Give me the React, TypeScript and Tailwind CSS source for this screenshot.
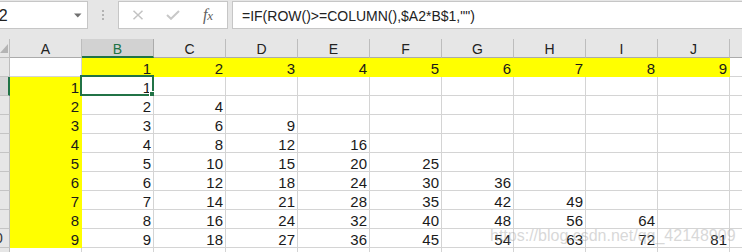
import React from "react";

const COLS = ["A", "B", "C", "D", "E", "F", "G", "H", "I", "J"];

function RowHeader({ label, selected }: { label: string; selected?: boolean }) {
  return (
    <div
      className={`w-[10px] shrink-0 overflow-hidden flex border-b border-[#c4c4c4] ${
        selected ? "bg-[#d6d6d6] border-r-2 border-r-[#217346]" : "bg-[#e6e6e6] border-r border-r-[#bdbdbd]"
      }`}
    >
      <div className="w-[30px] shrink-0 -ml-[20px] text-center text-[14px] leading-[18px] text-[#333]">{label}</div>
    </div>
  );
}

function Cell({ value, yellow, selected }: { value: string; yellow?: boolean; selected?: boolean }) {
  return (
    <div
      className={`relative w-[72px] shrink-0 border-r border-b text-right pr-[2px] pt-[2px] text-[15px] leading-[17px] ${
        yellow ? "bg-[#ffff00] border-[#ffff00]" : "bg-white border-[#d4d4d4]"
      }`}
    >
      {value}
      {selected && (
        <div className="absolute -left-[2px] -top-[2px] w-[74px] h-[21px] border-2 border-[#217346]">
          <div className="absolute -right-[4px] -bottom-[4px] w-[7px] h-[7px] bg-[#217346] border border-white" />
        </div>
      )}
    </div>
  );
}

export default function App() {
  const rows = [1, 2, 3, 4, 5, 6, 7, 8, 9];
  return (
    <div className="relative w-[742px] h-[252px] overflow-hidden bg-white font-['Liberation_Sans',Arial,sans-serif] text-[#1a1a1a]">
      {/* formula toolbar */}
      <div className="h-[39px] bg-[#e6e6e6] pt-[1px] flex items-start">
        <div className="h-[28px] w-[88px] shrink-0 overflow-hidden bg-white border border-l-0 border-[#c6c6c6] flex items-center justify-between pr-[5px]">
          <span className="text-[16px] -ml-[12px] text-[#222] pt-[1px]">B2</span>
          <svg width="8" height="5" viewBox="0 0 8 5">
            <path d="M0 0.5H7.5L3.75 4.5Z" fill="#707070" />
          </svg>
        </div>
        <div className="w-[30px] h-[28px] shrink-0 flex flex-col items-center justify-center gap-[2px]">
          <div className="w-[2px] h-[2px] bg-[#b3b3b3]" />
          <div className="w-[2px] h-[2px] bg-[#b3b3b3]" />
          <div className="w-[2px] h-[2px] bg-[#b3b3b3]" />
        </div>
        <div className="h-[28px] w-[110px] shrink-0 bg-white border border-[#c6c6c6] flex items-center">
          <div className="w-[38px] flex justify-center">
            <svg width="12" height="10" viewBox="0 0 12 10">
              <path d="M1.5 0.8L10.5 9.2M10.5 0.8L1.5 9.2" stroke="#c3c3c3" strokeWidth="1.5" />
            </svg>
          </div>
          <div className="w-[32px] flex justify-center">
            <svg width="14" height="10" viewBox="0 0 14 10">
              <path d="M1 5L5 8.8L13 1" stroke="#c8c8c8" strokeWidth="2" fill="none" />
            </svg>
          </div>
          <div className="w-[38px] flex justify-center">
            <span className="italic font-['Liberation_Serif',serif] text-[16px] leading-none text-[#5f5f5f]">
              f<span className="text-[13px]">x</span>
            </span>
          </div>
        </div>
        <div className="ml-[4px] h-[28px] flex-1 bg-white border border-r-0 border-[#c6c6c6] pl-[9px] pt-[3px] flex items-center text-[14px] text-[#222] whitespace-nowrap">
          =IF(ROW()&gt;=COLUMN(),$A2*B$1,"")
        </div>
      </div>

      {/* column headers */}
      <div className="flex h-[19px] bg-[#e6e6e6]">
        <div className="w-[10px] shrink-0 border-r border-b border-[#bdbdbd] flex items-end justify-end pb-[4px] pr-[1px]">
          <svg width="8" height="9" viewBox="0 0 8 9">
            <path d="M8 0V9H0Z" fill="#b4b4b4" />
          </svg>
        </div>
        {COLS.map((c) =>
          c === "B" ? (
            <div
              key={c}
              className="w-[72px] shrink-0 bg-[#d2d2d2] border-r border-r-[#ababab] border-b-2 border-b-[#217346] text-center text-[14px] leading-[18px] pt-[1px] text-[#217346]"
            >
              {c}
            </div>
          ) : (
            <div
              key={c}
              className="w-[72px] shrink-0 border-r border-r-[#bdbdbd] border-b border-b-[#ababab] text-center text-[14px] leading-[18px] pt-[1px] text-[#222]"
            >
              {c}
            </div>
          )
        )}
        <div className="flex-1 border-b border-[#ababab]" />
      </div>

      {/* first sheet row */}
      <div className="flex h-[19px]">
        <RowHeader label="1" />
        <Cell value="" />
        {rows.map((c) => (
          <Cell key={c} value={String(c)} yellow />
        ))}
        <div className="flex-1 border-b border-[#d4d4d4]" />
      </div>

      {rows.map((r) => (
        <div key={r} className="flex h-[19px]">
          <RowHeader label={String(r + 1)} selected={r === 1} />
          <Cell value={String(r)} yellow />
          {rows.map((c) => (
            <Cell key={c} value={r >= c ? String(r * c) : ""} selected={r === 1 && c === 1} />
          ))}
          <div className="flex-1 border-b border-[#d4d4d4]" />
        </div>
      ))}

      {/* partial row */}
      <div className="flex h-[19px]">
        <RowHeader label="11" />
        {COLS.map((c) => (
          <div key={c} className="w-[72px] shrink-0 border-r border-[#d4d4d4]" />
        ))}
      </div>

      {/* watermark */}
      <div className="absolute left-[490px] top-[224px] text-[16px] text-[#a0a0a0] opacity-40 whitespace-nowrap pointer-events-none">
        https://blog.csdn.net/qq_42148909
      </div>
    </div>
  );
}
